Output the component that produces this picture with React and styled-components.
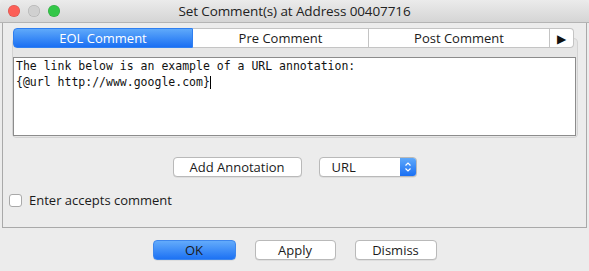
import React from 'react'
import styled, { createGlobalStyle } from 'styled-components'

const GlobalStyle = createGlobalStyle`
  html, body {
    margin: 0;
    padding: 0;
    background: #ececec;
  }
  body {
    font-family: 'Open Sans', 'Liberation Sans', sans-serif;
    font-size: 13px;
    color: #1b1b1b;
  }
`

const Window = styled.div`
  width: 589px;
  height: 271px;
  background: #ececec;
  border-radius: 5px;
  overflow: hidden;
  display: flex;
  flex-direction: column;
`

const TitleBar = styled.div`
  height: 22px;
  flex: none;
  position: relative;
  display: flex;
  align-items: center;
  justify-content: center;
  background: linear-gradient(#ebebeb, #d5d5d5);
  border-bottom: 1px solid #b4b4b4;
`

const Lights = styled.div`
  position: absolute;
  left: 8px;
  top: 5px;
  display: flex;
  gap: 8px;
`

const Light = styled.span`
  width: 12px;
  height: 12px;
  border-radius: 50%;
  background: ${(p) => p.color};
  box-shadow: inset 0 0 0 0.5px rgba(0, 0, 0, 0.18);
`

const Title = styled.div`
  font-size: 13.5px;
  color: #222;
  letter-spacing: -0.1px;
`

const Panel = styled.div`
  margin: 0 2px;
  height: 205px;
  box-sizing: border-box;
  flex: none;
  border: 1px solid #a9a9a9;
  border-top: none;
  display: flex;
  flex-direction: column;
  padding-top: 5px;
`

const TabArea = styled.div`
  margin: 0 8px 0 9px;
  display: flex;
  flex-direction: column;
`

const TabRow = styled.div`
  position: relative;
  z-index: 1;
  height: 20px;
  margin: 0 3px 0 1px;
  display: flex;
`

const Tab = styled.div`
  flex: 0 0 ${(p) => p.w}px;
  display: flex;
  align-items: center;
  justify-content: center;
  box-sizing: border-box;
  background: ${(p) =>
    p.active ? 'linear-gradient(#5fa9fa, #1a6ff3)' : '#ffffff'};
  color: ${(p) => (p.active ? '#ffffff' : '#1b1b1b')};
  border: 1px solid ${(p) => (p.active ? '#2f7ff0' : '#c4c4c4')};
  border-left: ${(p) => (p.first ? '' : 'none')};
  border-radius: ${(p) =>
    p.first ? '4px 0 0 4px' : p.last ? '0 4px 4px 0' : '0'};
  font-size: 13px;
`

const Arrow = styled.span`
  font-size: 12px;
  color: #111;
`

const Pane = styled.div`
  margin-top: -10px;
  padding: 18px 1px 1px 0;
  background: #e6e6e6;
  border: 1px solid #d3d3d3;
  border-radius: 4px;
`

const Editor = styled.div`
  height: 75px;
  background: #ffffff;
  border: 1px solid #8c8c8c;
  padding: 1px 2px;
  box-sizing: content-box;
  font-family: 'DejaVu Sans Mono', monospace;
  font-size: 11.5px;
  line-height: 15.5px;
  color: #111;
  white-space: pre;
`

const Caret = styled.span`
  display: inline-block;
  width: 1px;
  height: 13px;
  background: #000;
  vertical-align: -3px;
`

const ControlRow = styled.div`
  margin-top: 19px;
  display: flex;
  justify-content: center;
  gap: 17px;
`

const Button = styled.div`
  width: ${(p) => p.w}px;
  height: 20px;
  box-sizing: border-box;
  display: flex;
  align-items: center;
  justify-content: center;
  border-radius: 4px;
  font-size: 13px;
  background: ${(p) =>
    p.primary ? 'linear-gradient(#63abfb, #1d72f4)' : '#ffffff'};
  border: 1px solid ${(p) => (p.primary ? '#3d86ec' : '#b9b9b9')};
  box-shadow: 0 0.5px 0.5px rgba(0, 0, 0, 0.12);
  color: #1b1b1b;
`

const Select = styled.div`
  width: 98px;
  height: 20px;
  box-sizing: border-box;
  display: flex;
  border: 1px solid #b9b9b9;
  border-radius: 4px;
  background: #ffffff;
  overflow: hidden;
  box-shadow: 0 0.5px 0.5px rgba(0, 0, 0, 0.12);
`

const SelectValue = styled.div`
  flex: 1;
  display: flex;
  align-items: center;
  padding-left: 12px;
  font-size: 13px;
`

const Stepper = styled.div`
  width: 16px;
  display: flex;
  align-items: center;
  justify-content: center;
  background: linear-gradient(#5fa9fa, #1a6ff3);
`

const CheckRow = styled.div`
  margin: 14px 0 0 6px;
  display: flex;
  align-items: center;
  gap: 7px;
  font-size: 13px;
`

const Box = styled.span`
  width: 13px;
  height: 13px;
  box-sizing: border-box;
  border: 1px solid #a9a9a9;
  border-radius: 3px;
  background: #ffffff;
`

const Footer = styled.div`
  margin-top: 12px;
  display: flex;
  justify-content: center;
  gap: 19px;
`

const lines = [
  'The link below is an example of a URL annotation:',
  '{@url http://www.google.com}',
]

export default function App() {
  return (
    <>
      <GlobalStyle />
      <Window>
        <TitleBar>
          <Lights>
            <Light color="#fc5f57" />
            <Light color="#d0d0d0" />
            <Light color="#33c748" />
          </Lights>
          <Title>Set Comment(s) at Address 00407716</Title>
        </TitleBar>
        <Panel>
          <TabArea>
            <TabRow>
              <Tab w={180} active first>EOL Comment</Tab>
              <Tab w={176}>Pre Comment</Tab>
              <Tab w={181}>Post Comment</Tab>
              <Tab w={24} last>
                <Arrow>▶</Arrow>
              </Tab>
            </TabRow>
            <Pane>
              <Editor>
                {lines[0]}
                {'\n'}
                {lines[1]}
                <Caret />
              </Editor>
            </Pane>
          </TabArea>
          <ControlRow>
            <Button w={129}>Add Annotation</Button>
            <Select>
              <SelectValue>URL</SelectValue>
              <Stepper>
                <svg width="8" height="12" viewBox="0 0 8 12">
                  <path
                    d="M1.5 4.5 L4 2 L6.5 4.5 M1.5 7.5 L4 10 L6.5 7.5"
                    fill="none"
                    stroke="#fff"
                    strokeWidth="1.2"
                  />
                </svg>
              </Stepper>
            </Select>
          </ControlRow>
          <CheckRow>
            <Box />
            Enter accepts comment
          </CheckRow>
        </Panel>
        <Footer>
          <Button w={83} primary>OK</Button>
          <Button w={81}>Apply</Button>
          <Button w={82}>Dismiss</Button>
        </Footer>
      </Window>
    </>
  )
}
